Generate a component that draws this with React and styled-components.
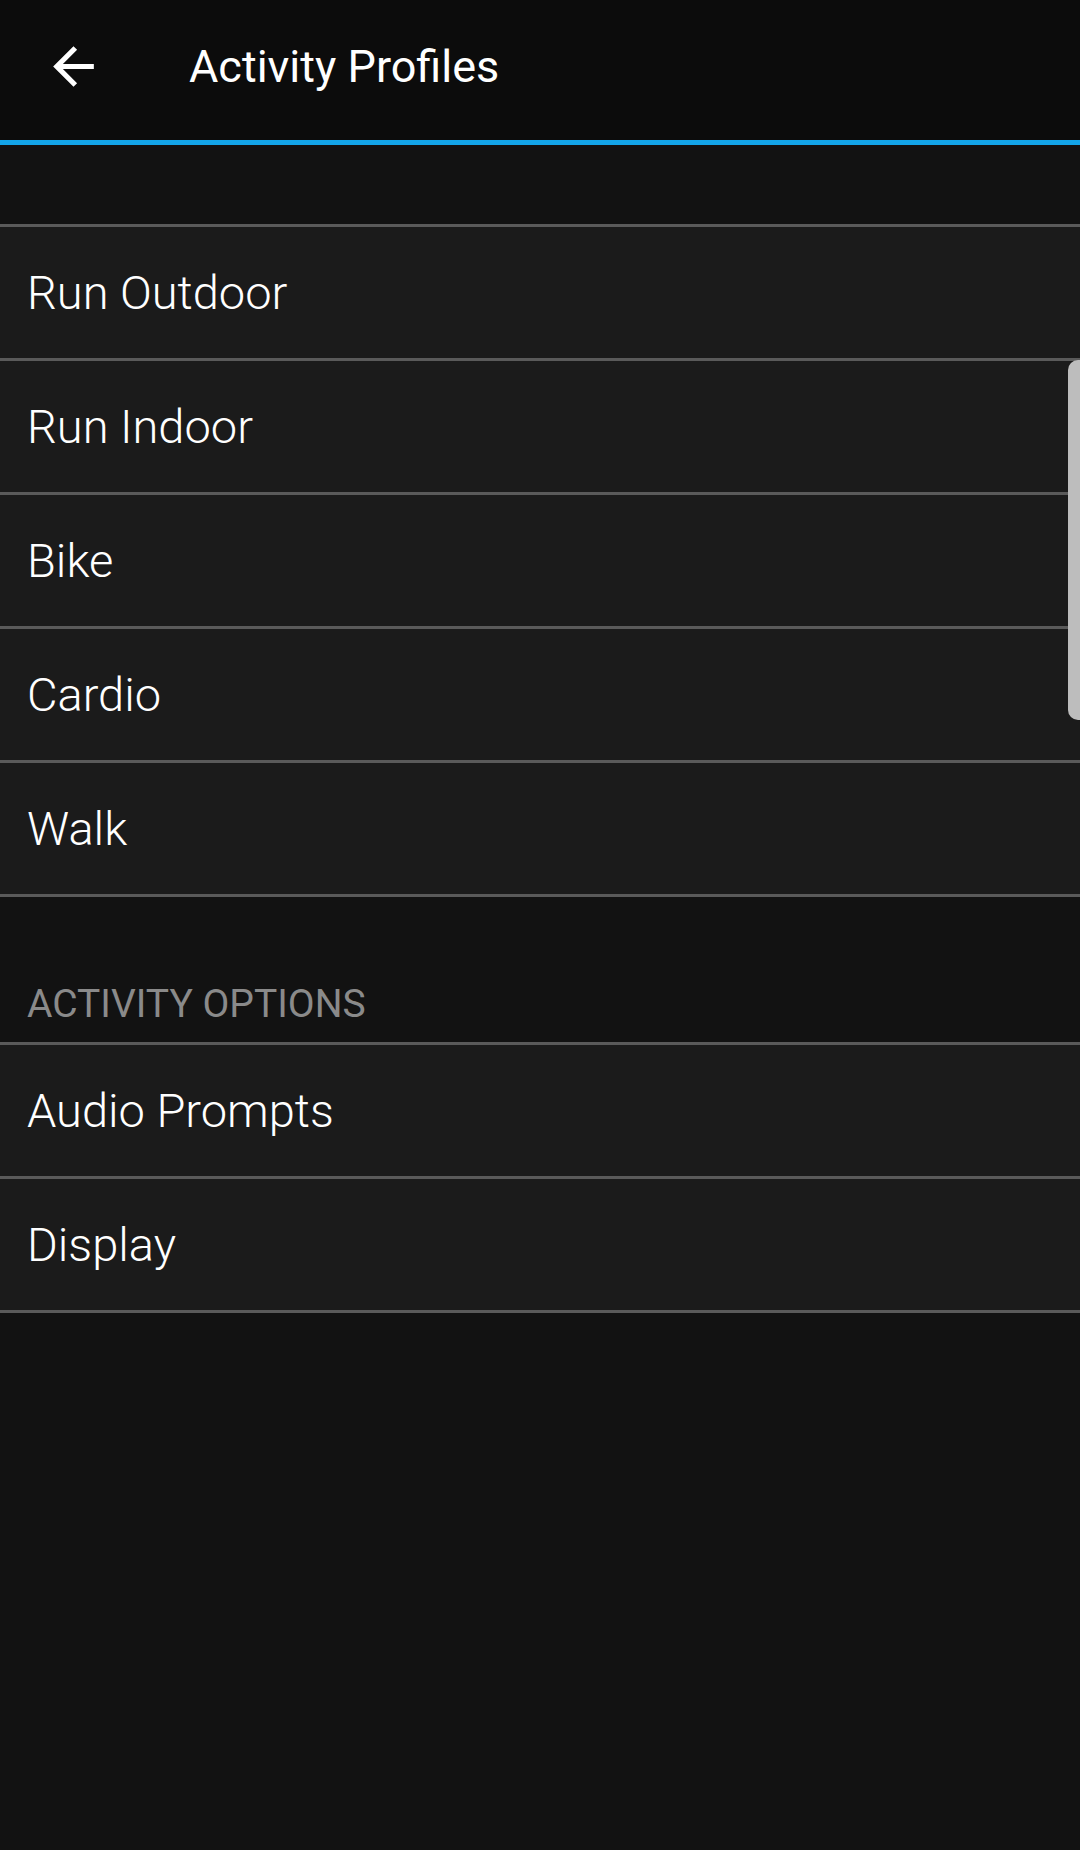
import React from "react";
import styled, { createGlobalStyle } from "styled-components";

/* style */

const GlobalStyle = createGlobalStyle`
  html, body {
    margin: 0;
    padding: 0;
    background: #121212;
  }
  body {
    font-family: Roboto, "Noto Sans", "Liberation Sans", sans-serif;
    -webkit-font-smoothing: antialiased;
  }
`;

const Screen = styled.div`
  width: 1080px;
  min-height: 1850px;
  background-color: #121212;
  display: flex;
  flex-direction: column;
`;

const TopBar = styled.header`
  display: flex;
  align-items: center;
  box-sizing: border-box;
  height: 145px;
  padding-bottom: 7px;
  background-color: #0c0c0c;
  border-bottom: 5px solid #13a5e9;
`;

const BackButton = styled.button`
  display: flex;
  align-items: center;
  justify-content: center;
  margin-left: 43px;
  width: 61px;
  height: 61px;
  padding: 0;
  border: none;
  background: none;
  color: #fff;
`;

const Title = styled.h1`
  margin: 0 0 0 85px;
  font-size: 45px;
  font-weight: 400;
  color: #fff;
  line-height: 1;
`;

const Content = styled.main`
  position: relative;
  padding-top: 79px;
`;

const List = styled.ul`
  margin: 0;
  padding: 0;
  list-style: none;
  border-bottom: 3px solid #5a5a5a;
`;

const Row = styled.li`
  display: flex;
  align-items: center;
  height: 131px;
  padding-left: 27px;
  border-top: 3px solid #5a5a5a;
  background-color: #1b1b1b;
  color: #fff;
  font-size: 47px;
  font-weight: 300;
`;

const SectionTitle = styled.h2`
  display: flex;
  align-items: flex-end;
  height: 145px;
  margin: 0;
  padding: 0 0 18px 27px;
  box-sizing: border-box;
  font-size: 39px;
  font-weight: 400;
  line-height: 1;
  color: #8a8a8a;
  text-transform: uppercase;
`;

const ScrollThumb = styled.div`
  position: absolute;
  right: 0;
  top: 215px;
  width: 12px;
  height: 360px;
  background-color: #bdbdbd;
  border-radius: 10px 0 0 10px;
`;

const profiles = ["Run Outdoor", "Run Indoor", "Bike", "Cardio", "Walk"];
const options = ["Audio Prompts", "Display"];

function BackArrow() {
  return (
    <svg width="61" height="61" viewBox="0 0 24 24" fill="currentColor">
      <path d="M20 11H7.83l5.59-5.59L12 4l-8 8 8 8 1.41-1.41L7.83 13H20v-2z" />
    </svg>
  );
}

export default function App() {
  return (
    <Screen>
      <GlobalStyle />
      <TopBar>
        <BackButton aria-label="Back">
          <BackArrow />
        </BackButton>
        <Title>Activity Profiles</Title>
      </TopBar>
      <Content>
        <List>
          {profiles.map((p) => (
            <Row key={p}>{p}</Row>
          ))}
        </List>
        <SectionTitle>Activity Options</SectionTitle>
        <List>
          {options.map((o) => (
            <Row key={o}>{o}</Row>
          ))}
        </List>
        <ScrollThumb />
      </Content>
    </Screen>
  );
}
